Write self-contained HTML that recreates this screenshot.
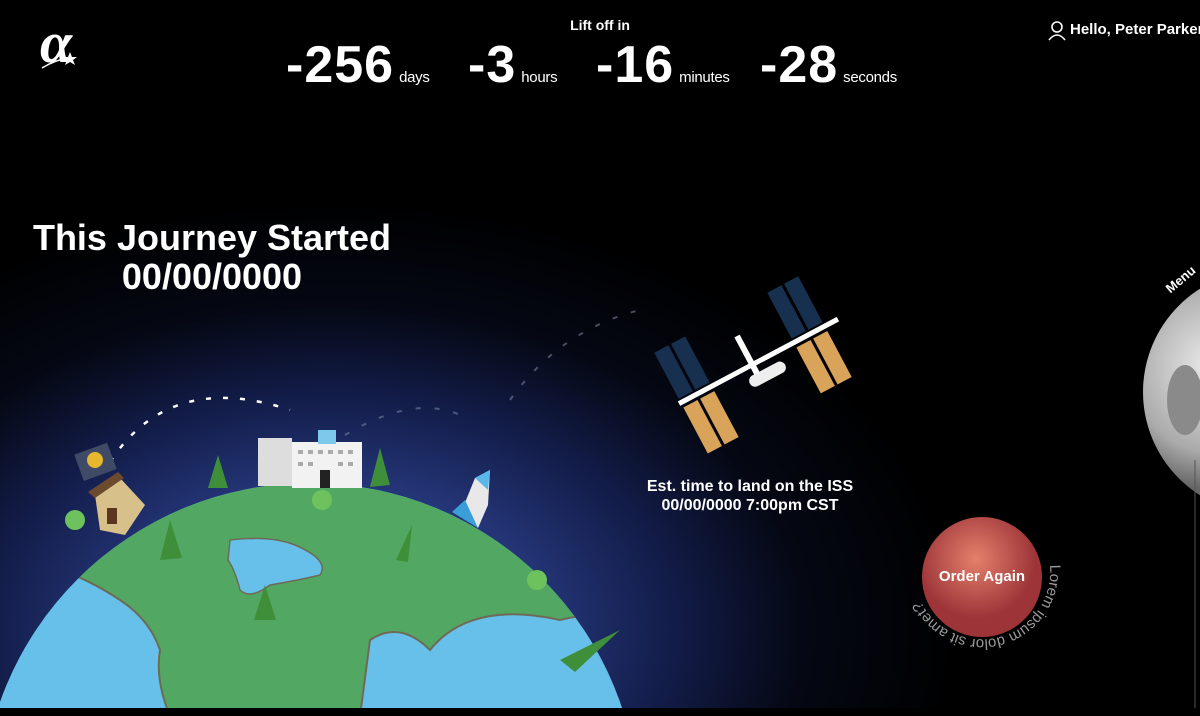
<!DOCTYPE html>
<html><head><meta charset="utf-8"><style>
html,body{margin:0;padding:0;background:#000;width:1200px;height:716px;overflow:hidden;font-family:"Liberation Sans",sans-serif;color:#fff}
.a{position:absolute;white-space:nowrap}
.n{font-size:52px;font-weight:bold;letter-spacing:1px}
.u{font-size:15px;margin-left:5px;letter-spacing:-0.3px}
</style></head><body>
<div style="position:absolute;left:0;top:0;width:1200px;height:716px;overflow:hidden">
<div class="a" style="left:-300px;top:200px;width:1260px;height:860px;background:radial-gradient(ellipse 50% 50% at 50% 50%,#3e55a4 0%,#283a80 30%,#121c48 55%,#050814 75%,rgba(0,0,0,0) 100%)"></div>

<svg class="a" style="left:0;top:0" width="1200" height="716">
<path d="M110 462 Q170 370 290 410" stroke="#fff" stroke-width="2.5" fill="none" stroke-dasharray="5 12"/>
<path d="M345 435 Q420 390 470 420 M510 400 Q560 330 640 310" stroke="#8a94b0" stroke-width="2" fill="none" stroke-dasharray="5 14" opacity=".5"/>
<defs><clipPath id="e"><circle cx="310" cy="812" r="329"/></clipPath></defs>
<circle cx="310" cy="812" r="329" fill="#67c0ea"/>
<g clip-path="url(#e)">
<path d="M0 450 L700 450 L700 660 Q640 600 560 620 Q470 600 430 650 Q400 620 370 640 L360 716 L170 716 Q155 680 160 650 Q150 620 120 600 Q90 580 60 570 L0 560 Z" fill="#52a862" stroke="#6e6a55" stroke-width="2"/>
<path d="M230 540 Q270 535 295 545 Q330 560 320 575 Q300 580 270 585 Q250 600 240 590 Q235 570 228 560 Z" fill="#67c0ea" stroke="#6e6a55" stroke-width="1.5"/>
</g>
<rect x="258" y="438" width="34" height="48" fill="#ddd"/>
<rect x="292" y="442" width="70" height="46" fill="#f2f2f2"/>
<g fill="#aaa"><rect x="298" y="450" width="5" height="4"/><rect x="308" y="450" width="5" height="4"/><rect x="318" y="450" width="5" height="4"/><rect x="328" y="450" width="5" height="4"/><rect x="338" y="450" width="5" height="4"/><rect x="348" y="450" width="5" height="4"/><rect x="298" y="462" width="5" height="4"/><rect x="308" y="462" width="5" height="4"/><rect x="338" y="462" width="5" height="4"/><rect x="348" y="462" width="5" height="4"/></g>
<rect x="318" y="430" width="18" height="14" fill="#7dc9ec"/>
<rect x="320" y="470" width="10" height="18" fill="#222"/>
<polygon points="95,495 120,478 145,505 125,535 100,530" fill="#d8c08a"/>
<polygon points="88,492 118,472 124,478 95,498" fill="#6b4a2e"/>
<rect x="107" y="508" width="10" height="16" fill="#5a3520"/>
<rect x="78" y="448" width="35" height="28" fill="#3e4a66" transform="rotate(-20 95 462)"/>
<circle cx="95" cy="460" r="8" fill="#e7b82e"/>
<g fill="#3f8f3a">
<polygon points="218,455 208,488 228,488"/><polygon points="380,448 370,487 390,485"/>
<polygon points="170,520 160,560 182,558"/><polygon points="265,585 254,620 276,620"/>
<polygon points="412,525 396,560 408,562"/><polygon points="620,630 560,660 575,672"/>
</g>
<g fill="#6ec25e"><circle cx="75" cy="520" r="10"/><circle cx="322" cy="500" r="10"/><circle cx="537" cy="580" r="10"/></g>
<polygon points="462,510 475,478 490,470 488,505 478,528" fill="#e8e8e8"/>
<polygon points="475,478 490,470 488,490" fill="#5ab8e8"/>
<path d="M452 512 L465 500 L478 528 Z" fill="#3a9fd8"/>
<g transform="rotate(-28 757 365)">
<rect x="670" y="360" width="180" height="5" fill="#fff"/>
<rect x="750" y="330" width="6" height="50" fill="#fff"/>
<rect x="742" y="372" width="40" height="12" rx="6" fill="#eee"/>
<g fill="#17304f"><rect x="672" y="306" width="16" height="52"/><rect x="691" y="306" width="16" height="52"/><rect x="800" y="306" width="16" height="52"/><rect x="819" y="306" width="16" height="52"/></g>
<g fill="#d9a35a"><rect x="672" y="368" width="16" height="52"/><rect x="691" y="368" width="16" height="52"/><rect x="800" y="368" width="16" height="52"/><rect x="819" y="368" width="16" height="52"/></g>
</g>
<defs><radialGradient id="m" cx="30%" cy="40%"><stop offset="0" stop-color="#eee"/><stop offset=".7" stop-color="#aaa"/><stop offset="1" stop-color="#666"/></radialGradient>
<radialGradient id="r" cx="45%" cy="35%"><stop offset="0" stop-color="#e5806c"/><stop offset="1" stop-color="#9c3438"/></radialGradient>
<path id="cp" d="M1050 565 A68 68 0 1 1 914 577"/></defs>
<circle cx="1265" cy="392" r="122" fill="url(#m)"/>
<ellipse cx="1185" cy="400" rx="18" ry="35" fill="#8a8a8a"/>
<line x1="1195" y1="460" x2="1195" y2="716" stroke="#555" stroke-width="1"/>
<circle cx="982" cy="577" r="60" fill="url(#r)"/>
<text font-size="15" fill="#999" font-family="Liberation Sans"><textPath href="#cp">Lorem ipsum dolor sit amet?</textPath></text>
<text x="1160" y="285" font-size="13" font-weight="bold" fill="#fff" transform="rotate(-40 1177 275)">Menu</text>
<text x="40" y="62" font-size="58" font-family="Liberation Serif" font-style="italic" font-weight="bold" fill="#fff">α</text>
<path d="M42 68 Q55 60 68 58" stroke="#fff" stroke-width="1.5" fill="none"/>
<polygon points="70,52 72,57 77,57 73,60 75,65 70,62 65,65 67,60 63,57 68,57" fill="#fff"/>
<circle cx="1057" cy="27" r="5" stroke="#fff" stroke-width="1.6" fill="none"/>
<path d="M1049 40 Q1057 30 1065 40" stroke="#fff" stroke-width="1.6" fill="none"/>
<rect x="0" y="708" width="1200" height="8" fill="#000"/>
</svg>

<div class="a" style="left:0;width:1200px;top:17px;text-align:center;font-size:14px;font-weight:bold">Lift off in</div>
<div class="a" style="left:286px;top:35px"><span class="n">-256</span><span class="u">days</span></div>
<div class="a" style="left:468px;top:35px"><span class="n">-3</span><span class="u">hours</span></div>
<div class="a" style="left:596px;top:35px"><span class="n">-16</span><span class="u">minutes</span></div>
<div class="a" style="left:760px;top:35px"><span class="n">-28</span><span class="u">seconds</span></div>
<div class="a" style="left:1070px;top:21px;font-size:15px;font-weight:bold">Hello, Peter Parker</div>
<div class="a" style="left:0;width:424px;top:218px;text-align:center;font-size:36px;font-weight:bold;line-height:39px">This Journey Started<br>00/00/0000</div>
<div class="a" style="left:600px;width:300px;top:477px;text-align:center;font-size:16px;font-weight:bold;line-height:19px">Est. time to land on the ISS<br>00/00/0000 7:00pm CST</div>
<div class="a" style="left:922px;width:120px;top:568px;text-align:center;font-size:15px;font-weight:bold">Order Again</div>
</div>
</body></html>
